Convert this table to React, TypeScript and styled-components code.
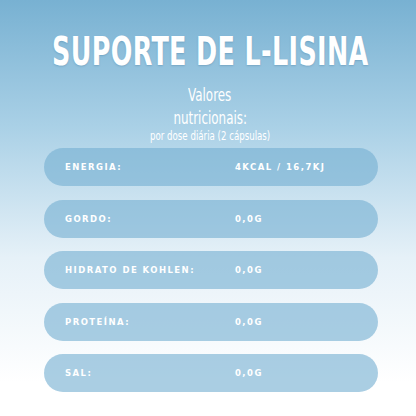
import React from 'react';
import styled, { createGlobalStyle } from 'styled-components';

const GlobalStyle = createGlobalStyle`
  html, body {
    margin: 0;
    padding: 0;
  }
  body {
    font-family: 'Liberation Sans', Arial, sans-serif;
  }
`;

const Page = styled.div`
  width: 416px;
  height: 416px;
  overflow: hidden;
  background: linear-gradient(180deg, #78b1d2 0%, #a9d0e6 30%, #e6f1f8 62%, #ffffff 92%);
  display: flex;
  flex-direction: column;
  align-items: center;
`;

const Title = styled.h1`
  margin: 28px 0 0 4px;
  font-family: 'DejaVu Sans Condensed', sans-serif;
  font-weight: 700;
  font-size: 39px;
  line-height: 48px;
  color: #ffffff;
  letter-spacing: 0.5px;
  transform: scaleX(0.725);
  white-space: nowrap;
  text-shadow: 0 1px 2px rgba(40, 90, 130, 0.25);
`;

const Subtitle = styled.div`
  margin: 8px 0 0 4px;
  display: flex;
  flex-direction: column;
  align-items: center;
  font-family: 'DejaVu Sans Condensed', sans-serif;
  color: #ffffff;
`;

const SubLine = styled.span<{ $small?: boolean }>`
  font-size: ${p => (p.$small ? '12px' : '17px')};
  line-height: ${p => (p.$small ? '13px' : '23px')};
  transform: scaleX(${p => (p.$small ? 0.8 : 0.78)});
  white-space: nowrap;
`;

const List = styled.div`
  margin: 5px 0 0 6px;
  width: 334px;
  display: flex;
  flex-direction: column;
  gap: 13.5px;
`;

const Row = styled.div`
  height: 38px;
  border-radius: 19px;
  background: rgba(118, 176, 210, 0.62);
  display: flex;
  align-items: center;
  padding-left: 21px;
  font-family: 'DejaVu Sans', sans-serif;
  font-weight: 700;
  font-size: 8.5px;
  letter-spacing: 1.45px;
  color: #ffffff;
`;

const Label = styled.span`
  width: 170px;
`;

const Value = styled.span``;

const rows = [
  ['ENERGIA:', '4KCAL / 16,7KJ'],
  ['GORDO:', '0,0G'],
  ['HIDRATO DE KOHLEN:', '0,0G'],
  ['PROTEÍNA:', '0,0G'],
  ['SAL:', '0,0G'],
];

export default function App() {
  return (
    <Page>
      <GlobalStyle />
      <Title>SUPORTE DE L-LISINA</Title>
      <Subtitle>
        <SubLine>Valores</SubLine>
        <SubLine>nutricionais:</SubLine>
        <SubLine $small>por dose diária (2 cápsulas)</SubLine>
      </Subtitle>
      <List>
        {rows.map(([l, v]) => (
          <Row key={l}>
            <Label>{l}</Label>
            <Value>{v}</Value>
          </Row>
        ))}
      </List>
    </Page>
  );
}
